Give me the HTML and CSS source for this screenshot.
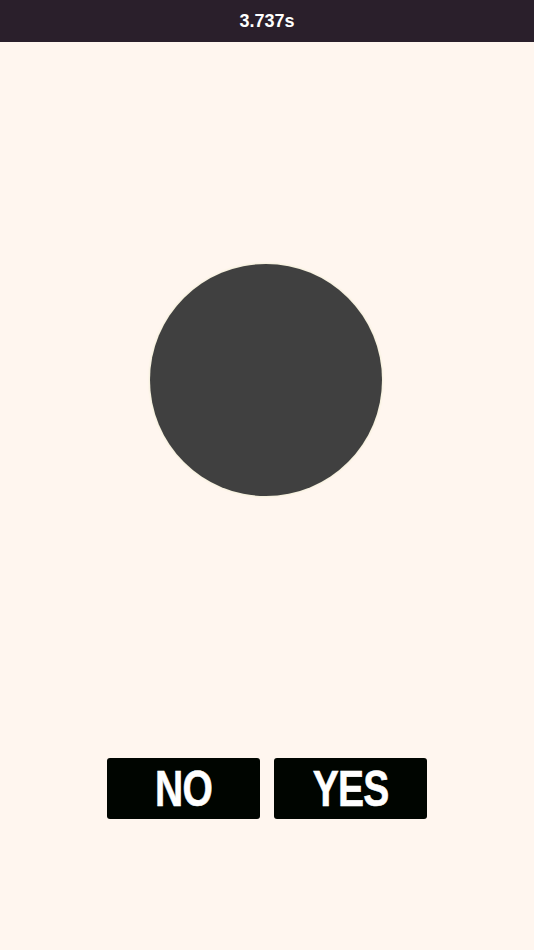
FILE: index.html
```html
<!DOCTYPE html>
<html>
<head>
<meta charset="utf-8">
<link rel="stylesheet" href="styles.css">
</head>
<body>
<div class="app">
  <header class="topbar">3.737s</header>
  <main class="stage">
    <div class="circle"></div>
  </main>
  <div class="answers">
    <button class="btn"><span class="label">NO</span></button>
    <button class="btn"><span class="label">YES</span></button>
  </div>
</div>
</body>
</html>
```
FILE: styles.css
```css
html, body {
  margin: 0;
  padding: 0;
  background: #fff6ef;
}
.app {
  width: 534px;
  height: 950px;
  display: flex;
  flex-direction: column;
  background: #fff6ef;
}
.topbar {
  height: 42px;
  background: #2a1f2b;
  color: #ffffff;
  font-family: "Liberation Sans", Arial, sans-serif;
  font-weight: bold;
  font-size: 18px;
  display: flex;
  align-items: center;
  justify-content: center;
}
.stage {
  height: 676px;
  display: flex;
  justify-content: center;
  padding-top: 222px;
  box-sizing: border-box;
}
.circle {
  width: 232px;
  height: 232px;
  border-radius: 50%;
  background: #404040;
  box-shadow: 0 0 2px 1px #f3efd9;
  margin-left: -2px;
}
.answers {
  display: flex;
  justify-content: center;
  gap: 14px;
  margin-top: 40px;
}
.btn {
  width: 153px;
  height: 61px;
  background: #000500;
  border: none;
  border-radius: 3px;
  color: #ffffff;
  font-family: "Liberation Sans", Arial, sans-serif;
  font-weight: bold;
  font-size: 50px;
  padding: 0;
  display: flex;
  align-items: center;
  justify-content: center;
}
.label {
  display: inline-block;
  transform: scaleX(0.78);
  letter-spacing: -1px;
  line-height: 1;
  margin-top: 0;
  -webkit-text-stroke: 0.6px #ffffff;
}
```
